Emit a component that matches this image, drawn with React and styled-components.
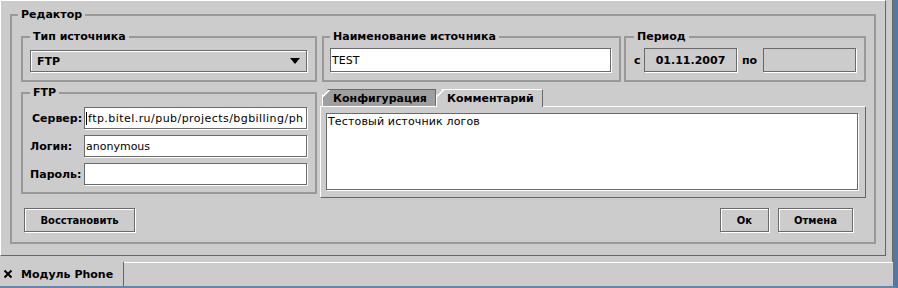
import React from 'react'
import styled, { createGlobalStyle } from 'styled-components'

const GlobalStyle = createGlobalStyle`
  html, body { margin: 0; padding: 0; background: #cccccc; }
  body {
    font-family: "DejaVu Sans", Verdana, sans-serif;
    font-size: 11px;
    color: #000;
  }
  * { box-sizing: border-box; }
`

const Frame = styled.div`
  width: 898px;
  height: 288px;
  display: flex;
  flex-direction: column;
  background: #cccccc;
  border-right: 5px solid #56779f;
  border-bottom: 2px solid #6585ae;
  overflow: hidden;
`

const TabPage = styled.div`
  height: 262px;
  padding-right: 6px;
  border-right: 1px solid #666666;
`

const InnerPanel = styled.div`
  width: 886px;
  height: 256px;
  padding: 7px 9px 0 9px;
  border-top: 1px solid #ffffff;
  border-left: 1px solid #ffffff;
  border-right: 1px solid #666666;
  border-bottom: 1px solid #666666;
`

const Group = styled.fieldset`
  margin: 0;
  min-width: 0;
  border: 2px solid #999999;
  padding: ${p => p.$pad};
  width: ${p => (p.$w ? `${p.$w}px` : 'auto')};
  margin-left: ${p => p.$ml || 0}px;
  flex: none;
`

const Title = styled.legend`
  padding: 0 3px;
  margin-left: ${p => p.$shift || 0}px;
  font-weight: bold;
  line-height: 13px;
`

const Row = styled.div`
  display: flex;
  align-items: ${p => p.$align || 'stretch'};
  margin-top: ${p => p.$mt || 0}px;
`

const Combo = styled.div`
  height: 22px;
  display: flex;
  align-items: center;
  justify-content: space-between;
  padding: 0 6px;
  font-weight: bold;
  border: 1px solid #6a6a6a;
  box-shadow: 1px 1px 0 #ffffff, inset 1px 1px 0 #ffffff;
`

const Arrow = styled.span`
  width: 0;
  height: 0;
  border-left: 5px solid transparent;
  border-right: 5px solid transparent;
  border-top: 6px solid #000;
`

const Field = styled.div`
  height: ${p => p.$h || 24}px;
  width: ${p => (p.$w ? `${p.$w}px` : 'auto')};
  flex: ${p => (p.$w ? 'none' : '1')};
  display: flex;
  align-items: center;
  justify-content: ${p => (p.$center ? 'center' : 'flex-start')};
  padding: 0 1px;
  background: ${p => p.$bg || '#ffffff'};
  font-weight: ${p => (p.$bold ? 'bold' : 'normal')};
  letter-spacing: ${p => p.$ls || 0}px;
  border: 1px solid #6a6a6a;
  box-shadow: 1px 1px 0 #ffffff;
  white-space: nowrap;
  overflow: hidden;
`

const Caret = styled.span`
  width: 1px;
  height: 13px;
  background: #000;
  margin-right: 1px;
  flex: none;
`

const Small = styled.span`
  font-weight: bold;
  width: ${p => (p.$w ? `${p.$w}px` : 'auto')};
  padding: ${p => p.$pad || 0};
`

const FormGrid = styled.div`
  display: grid;
  grid-template-columns: 54px 1fr;
  row-gap: 6px;
  align-items: center;
`

const Label = styled.span`
  font-weight: bold;
  padding-left: ${p => p.$pl || 0}px;
`

const Tabbed = styled.div`
  flex: 1;
  margin-left: 3px;
  margin-top: 3px;
`

const TabStrip = styled.div`
  display: flex;
  align-items: flex-end;
  height: 17px;
  padding-left: 2px;
`

const Tab = styled.div`
  position: relative;
  z-index: 1;
  height: ${p => (p.$active ? 18 : 17)}px;
  margin-bottom: ${p => (p.$active ? -1 : 0)}px;
  width: ${p => p.$w}px;
  padding-left: 10px;
  display: flex;
  align-items: center;
  font-weight: bold;
  border-top: 1px solid ${p => (p.$active ? '#ffffff' : '#6a6a6a')};
  border-right: 1px solid #6a6a6a;
  border-left: 1px solid #ffffff;
  background-origin: border-box;
  background: linear-gradient(
    135deg,
    transparent 4.2px,
    #ffffff 4.2px,
    #ffffff 5.2px,
    ${p => (p.$active ? '#cccccc' : '#9f9f9f')} 5.2px
  );
  clip-path: polygon(6px 0, 100% 0, 100% 100%, 0 100%, 0 6px);
`

const TabBody = styled.div`
  height: 92px;
  padding: 6px 7px 7px 5px;
  border-top: 1px solid #ffffff;
  border-left: 1px solid #ffffff;
  border-right: 1px solid #666666;
  border-bottom: 1px solid #666666;
`

const TextArea = styled.div`
  height: 100%;
  background: #ffffff;
  padding: 1px 0 0 1px;
  line-height: 14px;
  letter-spacing: 0.15px;
  border: 1px solid #6a6a6a;
  box-shadow: 1px 1px 0 #ffffff;
`

const ButtonRow = styled.div`
  display: flex;
  margin-top: 10px;
  padding: 0 13px 0 3px;
`

const Button = styled.button`
  height: 24px;
  width: ${p => p.$w}px;
  margin-left: ${p => (p.$ml === 'auto' ? 'auto' : `${p.$ml || 0}px`)};
  padding: 0;
  font: bold 10px "DejaVu Sans", Verdana, sans-serif;
  color: #000;
  background: #cccccc;
  border: 1px solid #6a6a6a;
  box-shadow: 1px 1px 0 #ffffff, inset 1px 1px 0 #ffffff;
`

const BottomBar = styled.div`
  display: flex;
  height: 24px;
`

const DocTab = styled.div`
  width: 124px;
  display: flex;
  align-items: center;
  padding-left: 3px;
  font-weight: bold;
  border-right: 1px solid #666666;
`

const CloseIcon = styled.svg`
  margin-right: 8px;
  flex: none;
`

const Filler = styled.div`
  flex: 1;
  border-top: 1px solid #ffffff;
`

export default function App() {
  return (
    <>
      <GlobalStyle />
      <Frame>
        <TabPage>
          <InnerPanel>
            <Group $pad="9px 8px 10px 9px">
              <Title $shift={-3}>Редактор</Title>

              <Row>
                <Group $w={296} $pad="7px 8px 8px 7px">
                  <Title>Тип источника</Title>
                  <Combo>
                    FTP
                    <Arrow />
                  </Combo>
                </Group>
                <Group $w={299} $ml={5} $pad="5px 8px 8px 6px">
                  <Title>Наименование источника</Title>
                  <Field>TEST</Field>
                </Group>
                <Group $w={242} $ml={3} $pad="5px 8px 8px 8px">
                  <Title>Период</Title>
                  <Row $align="center">
                    <Small $w={10}>с</Small>
                    <Field $w={93} $bg="#cccccc" $bold $center>01.11.2007</Field>
                    <Small $pad="0 6px 0 5px">по</Small>
                    <Field $bg="#cccccc" />
                  </Row>
                </Group>
              </Row>

              <Row $align="flex-start" $mt={4}>
                <Group $w={296} $pad="8px 8px 7px 7px">
                  <Title>FTP</Title>
                  <FormGrid>
                    <Label $pl={2}>Сервер:</Label>
                    <Field $h={22} $ls={0.45}>
                      <Caret />
                      ftp.bitel.ru/pub/projects/bgbilling/ph
                    </Field>
                    <Label>Логин:</Label>
                    <Field $h={22}>anonymous</Field>
                    <Label>Пароль:</Label>
                    <Field $h={22} />
                  </FormGrid>
                </Group>
                <Tabbed>
                  <TabStrip>
                    <Tab $w={114}>Конфигурация</Tab>
                    <Tab $w={107} $active>Комментарий</Tab>
                  </TabStrip>
                  <TabBody>
                    <TextArea>Тестовый источник логов</TextArea>
                  </TabBody>
                </Tabbed>
              </Row>

              <ButtonRow>
                <Button $w={111}>Восстановить</Button>
                <Button $w={49} $ml="auto">Ок</Button>
                <Button $w={75} $ml={9}>Отмена</Button>
              </ButtonRow>
            </Group>
          </InnerPanel>
        </TabPage>
        <BottomBar>
          <DocTab>
            <CloseIcon width="10" height="10" viewBox="0 0 10 10">
              <path d="M1.5 1.5 L8.5 8.5 M8.5 1.5 L1.5 8.5" stroke="#000" strokeWidth="2" />
            </CloseIcon>
            Модуль Phone
          </DocTab>
          <Filler />
        </BottomBar>
      </Frame>
    </>
  )
}
